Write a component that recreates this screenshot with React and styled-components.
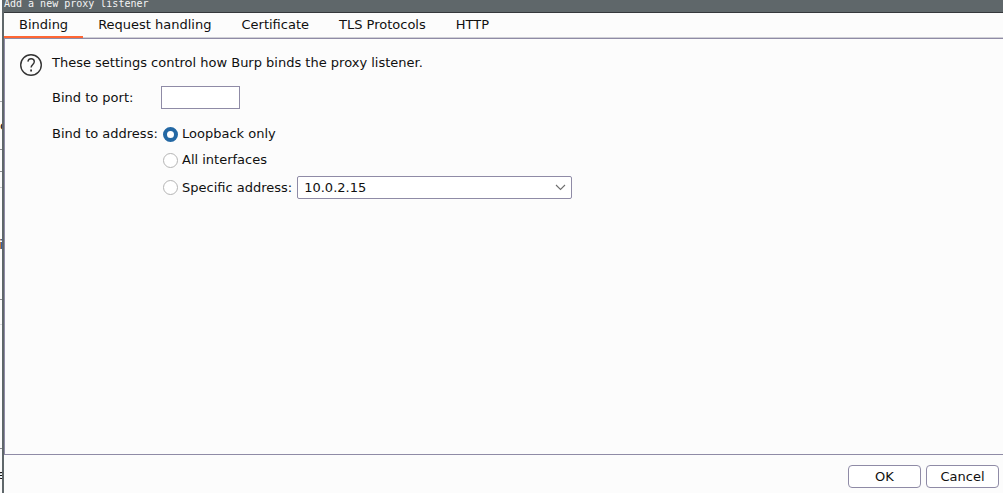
import React, { useState } from "react";
import styled, { createGlobalStyle } from "styled-components";

const GlobalStyle = createGlobalStyle`
  * { box-sizing: border-box; }
  body {
    margin: 0;
    background: #fcfcfc;
    color: #101010;
    font: 13px/16px "DejaVu Sans", sans-serif;
  }
`;

const Desktop = styled.div`
  display: flex;
  min-height: 100vh;
`;

const Behind = styled.div`
  flex: none;
  width: 2px;
  overflow: hidden;
`;

const BehindRow = styled.div`
  display: flex;
  align-items: flex-end;
  justify-content: ${(p) => (p.$align === "start" ? "flex-start" : "center")};
  height: ${(p) => p.$height}px;
  border-bottom: ${(p) => (p.$line ? `1px solid ${p.$line}` : "none")};
`;

const Dialog = styled.section`
  flex: 1;
  min-width: 0;
  display: flex;
  flex-direction: column;
  border-left: 2px solid #5f676a;
`;

const TitleBar = styled.h1`
  margin: 0;
  height: 13px;
  border-bottom: 1px solid #35383c;
  background: #5f676a;
  color: #f4f4f4;
  font: 10px/8px "DejaVu Sans Mono", monospace;
`;

const TabBar = styled.nav`
  display: flex;
  height: 25px;
  border-bottom: 1px solid #d0d0d6;
`;

const Tab = styled.button`
  flex: none;
  height: 25px;
  padding: 0 15px;
  border: 0;
  border-bottom: 2px solid ${(p) => (p.$active ? "#ff6633" : "transparent")};
  background: none;
  color: inherit;
  font: inherit;
`;

const Panel = styled.main`
  flex: 1;
  display: flex;
  align-items: flex-start;
  gap: 9px;
  padding: 14px 16px 14px 14px;
  border: solid #8f8ba6;
  border-width: 1px 0 1px 1px;
`;

const HelpButton = styled.button`
  flex: none;
  display: flex;
  padding: 0;
  border: 0;
  background: none;
`;

const Form = styled.form`
  flex: 1;
  display: flex;
  flex-direction: column;
  min-width: 0;
`;

const Intro = styled.p`
  margin: 2px 0 15px;
`;

const Field = styled.div`
  display: grid;
  grid-template-columns: 109px auto;
  justify-content: start;
  align-items: center;
  margin-bottom: 15px;
`;

const PortInput = styled.input`
  width: 79px;
  height: 23px;
  padding: 0 6px;
  border: 1px solid #8f8ba6;
  background: #fff;
  font: inherit;
`;

const AddressField = styled.div`
  display: grid;
  grid-template-columns: 111px auto;
  justify-content: start;
`;

const AddressLabel = styled.span`
  line-height: 20px;
  white-space: nowrap;
`;

const Options = styled.div`
  display: flex;
  flex-direction: column;
  gap: 6px;
`;

const Option = styled.div`
  display: flex;
  align-items: center;
  height: ${(p) => (p.$tall ? 23 : 20)}px;
`;

const OptionLabel = styled.label`
  display: flex;
  align-items: center;
  gap: 4px;
  white-space: nowrap;
`;

const Radio = styled.input`
  appearance: none;
  flex: none;
  width: 15px;
  height: 15px;
  margin: 0;
  border: 1px solid #b4b4b4;
  border-radius: 50%;
  background: #fff;
  &:checked { border: 4px solid #2468a4; }
`;

const SelectBox = styled.div`
  display: grid;
  align-items: center;
  margin-left: 5px;
  > * { grid-area: 1 / 1; }
  > svg { justify-self: end; margin-right: 6px; pointer-events: none; }
`;

const Select = styled.select`
  appearance: none;
  width: 275px;
  height: 23px;
  padding: 0 24px 0 6px;
  border: 1px solid #8f8ba6;
  border-radius: 2px;
  background: #fff;
  color: inherit;
  font: inherit;
`;

const Footer = styled.footer`
  display: flex;
  justify-content: flex-end;
  gap: 5px;
  padding: 10px 4px 5px;
`;

const Button = styled.button`
  width: 73px;
  height: 23px;
  padding: 0;
  border: 1px solid #8f8ba6;
  border-radius: 4px;
  background: #fff;
  color: inherit;
  font: inherit;
`;

const TABS = ["Binding", "Request handling", "Certificate", "TLS Protocols", "HTTP"];

const BEHIND_ROWS = [
  { height: 102, line: "#a8a8ac" },
  { height: 32, text: "c", align: "start" },
  { height: 16, line: "#8c8c90" },
  { height: 22, line: "#8c8c90" },
  { height: 16, line: "#c8c8cc" },
  { height: 65, text: "i" },
  { height: 47, line: "#8c8c90" },
  { height: 25, line: "#dcdce0" },
  { height: 124, line: "#8c8c90" },
  { height: 34, text: "e" },
];

export default function App() {
  const [tab, setTab] = useState("Binding");
  const [bind, setBind] = useState("loopback");
  const radio = (value) => ({
    type: "radio",
    name: "bind",
    value,
    checked: bind === value,
    onChange: () => setBind(value),
  });

  return (
    <Desktop>
      <GlobalStyle />
      <Behind aria-hidden="true">
        {BEHIND_ROWS.map((r, i) => (
          <BehindRow key={i} $height={r.height} $line={r.line} $align={r.align}>
            {r.text}
          </BehindRow>
        ))}
      </Behind>
      <Dialog>
        <TitleBar>Add a new proxy listener</TitleBar>
        <TabBar>
          {TABS.map((name) => (
            <Tab key={name} type="button" $active={name === tab} onClick={() => setTab(name)}>
              {name}
            </Tab>
          ))}
        </TabBar>
        <Panel>
          <HelpButton type="button" aria-label="Help">
            <svg width="24" height="24" viewBox="0 0 24 24" fill="none" stroke="#333" strokeWidth="1.4">
              <circle cx="12" cy="12" r="10.3" />
              <path d="M8.9 8.6C9.2 6.8 10.4 5.8 12.1 5.8c1.9 0 3.2 1.1 3.2 2.9 0 2.6-3.2 2.9-3.2 5.9" />
              <path d="M12.1 16.4v2" strokeWidth="1.8" />
            </svg>
          </HelpButton>
          <Form onSubmit={(e) => e.preventDefault()}>
            <Intro>These settings control how Burp binds the proxy listener.</Intro>
            <Field>
              <label htmlFor="port">Bind to port:</label>
              <PortInput id="port" type="text" />
            </Field>
            <AddressField role="radiogroup" aria-labelledby="bind-label">
              <AddressLabel id="bind-label">Bind to address:</AddressLabel>
              <Options>
                <Option>
                  <OptionLabel><Radio {...radio("loopback")} />Loopback only</OptionLabel>
                </Option>
                <Option>
                  <OptionLabel><Radio {...radio("all")} />All interfaces</OptionLabel>
                </Option>
                <Option $tall>
                  <OptionLabel><Radio {...radio("specific")} />Specific address:</OptionLabel>
                  <SelectBox>
                    <Select aria-label="Specific address" defaultValue="10.0.2.15">
                      <option>10.0.2.15</option>
                    </Select>
                    <svg width="11" height="7" viewBox="0 0 11 7" fill="none" stroke="#6e6e6e" strokeWidth="1.1">
                      <path d="M1 1l4.5 4.5L10 1" />
                    </svg>
                  </SelectBox>
                </Option>
              </Options>
            </AddressField>
          </Form>
        </Panel>
        <Footer>
          <Button type="button">OK</Button>
          <Button type="button">Cancel</Button>
        </Footer>
      </Dialog>
    </Desktop>
  );
}
